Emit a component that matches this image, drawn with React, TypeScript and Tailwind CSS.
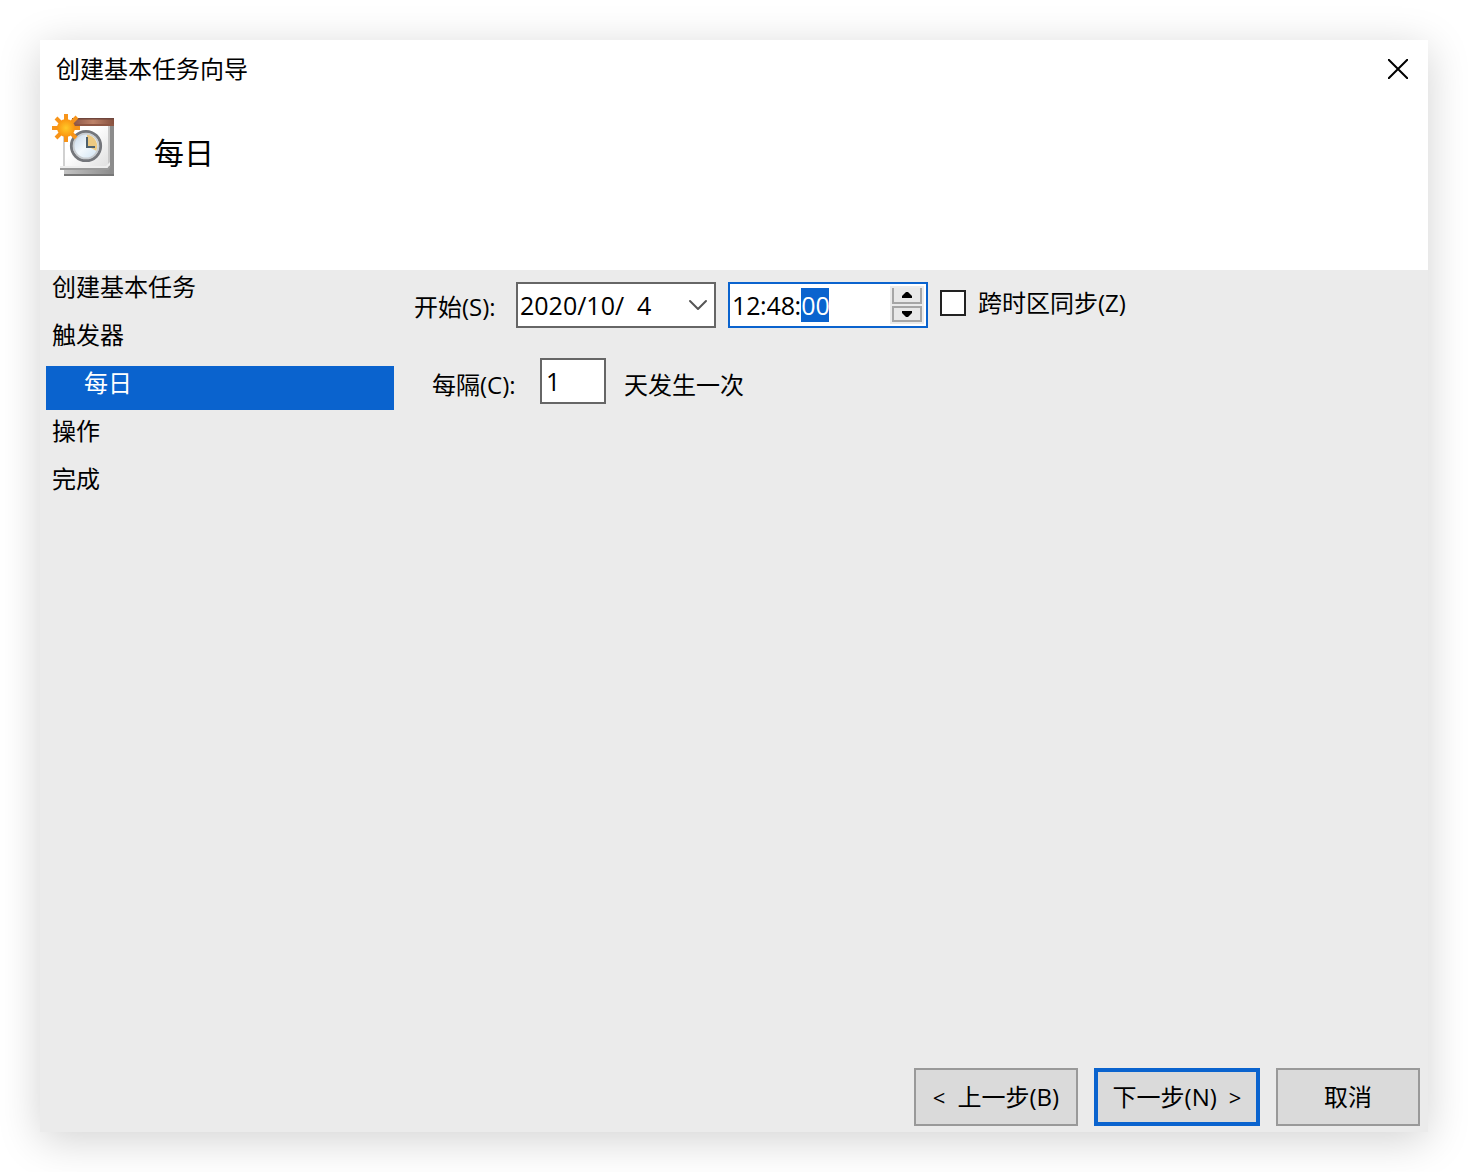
import { ChevronDown } from "lucide-react";
import clsx from "clsx";

const steps = [
  { name: "创建基本任务" },
  { name: "触发器" },
  { name: "每日", nested: true, active: true },
  { name: "操作" },
  { name: "完成" },
];

const timeParts = [
  { label: "时", value: "12" },
  { label: "分", value: "48" },
  { label: "秒", value: "00", selected: true },
];

function TaskIcon() {
  return (
    <svg viewBox="0 0 31 31" className="h-[62px] w-[62px]" aria-hidden="true">
      <defs>
        <linearGradient id="cover" x1="0" y1="0" x2="1" y2="0">
          <stop offset="0" stopColor="#8a5446" />
          <stop offset="0.5" stopColor="#bd8268" />
          <stop offset="1" stopColor="#86503f" />
        </linearGradient>
        <linearGradient id="page" x1="0" y1="0" x2="1" y2="1">
          <stop offset="0.4" stopColor="#ffffff" />
          <stop offset="1" stopColor="#dedede" />
        </linearGradient>
        <linearGradient id="stack" x1="0" y1="0" x2="1" y2="0">
          <stop offset="0" stopColor="#c4c4c4" />
          <stop offset="1" stopColor="#8a8a8a" />
        </linearGradient>
        <linearGradient id="face" x1="0" y1="0" x2="1" y2="1">
          <stop offset="0" stopColor="#bcd0e6" />
          <stop offset="0.5" stopColor="#f2f8fd" />
          <stop offset="1" stopColor="#c9dff0" />
        </linearGradient>
        <radialGradient id="sun">
          <stop offset="0" stopColor="#ffc928" />
          <stop offset="1" stopColor="#fb9410" />
        </radialGradient>
      </defs>
      <path d="M6 27h25v4H6z" fill="url(#stack)" />
      <path d="M6 30h25v1H6z" fill="#777777" />
      <path d="M29 5h2v25h-2z" fill="#8c8c8c" />
      <path d="M6 5h23v22H6z" fill="url(#page)" />
      <path d="M6 6v20" stroke="#bdbdbd" strokeWidth="0.7" />
      <path d="M28.5 6v19" stroke="#c9c9c9" />
      <path d="M4 26h23l2-2v3H4z" fill="#eeeeee" />
      <path d="M4 27.5h24l1-1.5" fill="none" stroke="#9a9a9a" strokeWidth="0.9" />
      <path d="M10 2h21v4H10z" fill="url(#cover)" />
      <path d="M10 2.4h21" stroke="#70463c" strokeWidth="0.8" />
      <path d="M11 5.5h20" stroke="#8f5744" />
      <circle cx="17" cy="16" r="7.3" fill="url(#face)" stroke="#74767b" strokeWidth="1.5" />
      <circle cx="17" cy="16" r="6.2" fill="none" stroke="#c9cdd1" strokeWidth="0.9" />
      <path d="M17.5 16v-5.6a5.7 5.7 0 0 1 4.6 8z" fill="#edc981" />
      <path d="M17.5 11.5v5h4" fill="none" stroke="#4e606d" />
      <path d="M7 0v14M0 7h14M2 2l10 10M12.5 1.500L2 12" stroke="#f7941a" strokeWidth="2" />
      <circle cx="7" cy="7" r="4.5" fill="url(#sun)" />
    </svg>
  );
}

function SpinButton({ label, down }: { label: string; down?: boolean }) {
  return (
    <button
      type="button"
      aria-label={label}
      className={clsx(
        "flex h-4 w-[30px] items-center justify-center border-2 border-[#a6a6a6] bg-[#e8e8e8]",
        !down && "border-t-0"
      )}
    >
      <svg viewBox="0 0 10 6" className="h-[6px] w-[10px] shrink-0">
        <path d={down ? "M0 0h10v2L6 6H4L0 2z" : "M0 6h10V4L6 0H4L0 4z"} />
      </svg>
    </button>
  );
}

export default function App() {
  return (
    <div className="flex min-h-screen bg-white p-10 font-['Open_Sans','Noto_Sans_CJK_SC',sans-serif] text-2xl leading-[34px] text-black">
      <div className="flex flex-1 flex-col bg-[#ebebeb] shadow-[0_8px_40px_rgba(0,0,0,0.18)]">
        <header className="h-[230px] bg-white">
          <div className="flex items-center justify-between pt-3 pr-5 pl-4">
            <h1>创建基本任务向导</h1>
            <button type="button" aria-label="关闭">
              <svg viewBox="0 0 20 20" className="h-5 w-5" stroke="black" strokeWidth="2">
                <path d="M0 0l20 20M20 0L0 20" />
              </svg>
            </button>
          </div>
          <div className="flex items-center gap-10 px-3 pt-7">
            <TaskIcon />
            <h2 className="pt-4 text-[30px]">每日</h2>
          </div>
        </header>

        <div className="flex flex-1">
          <nav className="w-[354px] pl-1.5">
            <ol className="flex flex-col gap-1">
              {steps.map((step) => (
                <li
                  key={step.name}
                  aria-current={step.active ? "step" : undefined}
                  className={clsx(
                    "h-11",
                    step.nested ? "pl-[38px]" : "pl-1.5",
                    step.active && "bg-[#0a63ce] text-white"
                  )}
                >
                  {step.name}
                </li>
              ))}
            </ol>
          </nav>

          <main className="flex flex-1 flex-col pt-3">
            <div className="flex gap-3 pl-5">
              <div className="flex">
                <label htmlFor="start" className="w-[102px] pt-2">开始(S):</label>
                <div className="flex h-[46px] w-[200px] items-center border-2 border-[#666666] bg-white">
                  <input
                    id="start"
                    defaultValue={"2020/10/\u00a0\u00a04"}
                    className="min-w-0 flex-1 pl-0.5 text-[25px] outline-none"
                  />
                  <button type="button" aria-label="选择日期">
                    <ChevronDown className="h-8 w-8 text-[#555555]" strokeWidth={1.5} />
                  </button>
                </div>
              </div>

              <div className="flex h-[46px] w-[200px] items-center justify-between border-2 border-[#0a63ce] bg-white px-0.5">
                <div className="flex text-[25px]">
                  {timeParts.map((part, index) => (
                    <div key={part.label} className="flex">
                      {index > 0 && <span>:</span>}
                      <input
                        aria-label={part.label}
                        defaultValue={part.value}
                        className={clsx("w-7 outline-none", part.selected && "bg-[#0a63ce] text-white")}
                      />
                    </div>
                  ))}
                </div>
                <div className="flex flex-col gap-0.5 bg-[#ebebeb] p-0.5">
                  <SpinButton label="增加" />
                  <SpinButton label="减少" down />
                </div>
              </div>

              <label className="flex h-[42px] items-center gap-3">
                <input type="checkbox" className="h-[26px] w-[26px] appearance-none border-2 border-[#222222] bg-white" />
                跨时区同步(Z)
              </label>
            </div>

            <div className="flex pt-[30px] pl-[38px]">
              <label htmlFor="interval" className="w-[108px] pt-2.5">每隔(C):</label>
              <input
                id="interval"
                defaultValue="1"
                className="h-[46px] w-[66px] border-2 border-[#666666] bg-white pl-1 text-[25px] outline-none"
              />
              <span className="pt-2.5 pl-[18px]">天发生一次</span>
            </div>
          </main>
        </div>

        <footer className="flex justify-end gap-4 pr-2 pb-1.5">
          <button
            type="button"
            className="flex h-[58px] w-[164px] items-center justify-center gap-3 border-2 border-[#999999] bg-[#dadada]"
          >
            <span className="text-[22px]">&lt;</span>上一步(B)
          </button>
          <button
            type="button"
            className="flex h-[58px] w-[166px] items-center justify-center gap-3 border-4 border-[#0a63ce] bg-[#dadada]"
          >
            下一步(N)<span className="text-[22px]">&gt;</span>
          </button>
          <button type="button" className="h-[58px] w-36 border-2 border-[#999999] bg-[#dadada]">
            取消
          </button>
        </footer>
      </div>
    </div>
  );
}
